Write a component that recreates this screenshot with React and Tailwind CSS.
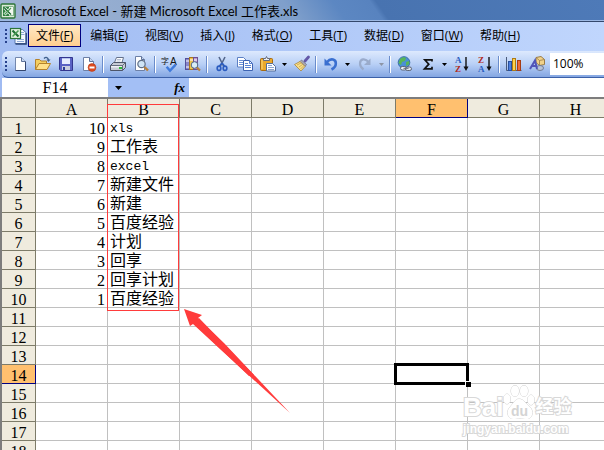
const COLUMNS = ['A', 'B', 'C', 'D', 'E', 'F', 'G', 'H', 'I', 'J', 'K', 'L'];
const WORDS = ['xls', '工作表', 'excel', '新建文件', '新建', '百度经验', '计划', '回享', '回享计划', '百度经验'];
const ROWS = Array.from({ length: 30 }, (_, i) => i + 1);
const MENUS = [
  ['文件', 'F'], ['编辑', 'E'], ['视图', 'V'], ['插入', 'I'], ['格式', 'O'],
  ['工具', 'T'], ['数据', 'D'], ['窗口', 'W'], ['帮助', 'H'],
];

function Svg({ children, className = 'h-4 w-4' }) {
  return (
    <svg viewBox="0 0 16 16" className={`${className} shrink-0 overflow-visible`} fill="none" aria-hidden="true">
      {children}
    </svg>
  );
}

function ExcelLogo() {
  return (
    <Svg>
      <rect x="1" y="1" width="14" height="14" rx="1" fill="#dcebd8" stroke="#2d7539" strokeWidth="1.400" />
      <rect x="3" y="3.500" width="10.500" height="9.500" fill="#2f8040" />
      <path d="M9 4h4v8.500H9z" fill="#f1f8ee" />
      <path d="M4.500 5l6.500 6.500" stroke="#fff" strokeWidth="2.600" />
      <path d="M11 5l-6.500 6.500" stroke="#fff" strokeWidth="2.600" />
      <path d="M4.500 5l6.500 6.500" stroke="#1f6b31" strokeWidth="1.500" />
      <path d="M11 5l-6.500 6.500" stroke="#4d9b55" strokeWidth="1.200" />
    </Svg>
  );
}

function WorkbookIcon() {
  return (
    <svg viewBox="0 0 18 20" className="h-5 w-[18px] shrink-0" fill="none" aria-hidden="true">
      <path d="M8 3.500h5.500l3.500 3v11H6V5z" fill="#f4f8ff" stroke="#5a78ae" />
      <path d="M12 6.500h3M12 8.500h3.500M8 13.500h7M8 15.500h7" stroke="#8fa9d6" />
      <path d="M17.200 7v11H6.500" stroke="#2d4678" strokeWidth="1.300" />
      <rect x="1.500" y="2.500" width="10" height="10" fill="#e4f3e0" stroke="#2d7539" strokeWidth="1.200" />
      <path d="M3.500 4.500l6 6" stroke="#1f7033" strokeWidth="2.200" />
      <path d="M9.500 4.500l-6 6" stroke="#4c9c56" strokeWidth="1.600" />
    </svg>
  );
}

const NewIcon = () => (
  <Svg>
    <path d="M3.500 1.500h6l4 4v9h-10z" fill="#fdfeff" stroke="#7387ad" />
    <path d="M13.500 5.500v9h-10" stroke="#33466f" />
    <path d="M9.500 1.500v4h4" fill="#c8d7ef" stroke="#5c7199" />
  </Svg>
);
const OpenIcon = () => (
  <Svg>
    <path d="M.5 13.500v-10h4l1.500 1.500h5.500v3" fill="#f4cf62" stroke="#b5822c" />
    <path d="M.5 13.500l3.500-6h11.500l-3.500 6z" fill="#ffe08a" stroke="#b5822c" />
    <path d="M9 2.500c2-2 4-1 4.500 1.500" stroke="#3f5f8c" strokeWidth="1.300" />
    <path d="M11.500 3.500h4l-2 2.500z" fill="#3f5f8c" />
  </Svg>
);
const SaveIcon = () => (
  <Svg>
    <path d="M1.500 1.500h13v13h-12l-1-1z" fill="#5a62c4" stroke="#33368f" />
    <rect x="4" y="2" width="8" height="6" fill="#e6edff" />
    <rect x="4" y="2" width="8" height="1" fill="#b6c4ef" />
    <rect x="4" y="10" width="8" height="4" fill="#c9cfdf" />
    <rect x="5" y="11" width="2" height="3" fill="#2c3c96" />
  </Svg>
);
const PermissionIcon = () => (
  <Svg>
    <path d="M2.500 1.500h6l4 4v9h-10z" fill="#fff" stroke="#6d80a6" />
    <path d="M8.500 1.500v4h4" fill="#c8d7ef" stroke="#5c7199" />
    <circle cx="11" cy="11.500" r="3.900" fill="#dd4a20" stroke="#b33a16" strokeWidth=".6" />
    <rect x="8.500" y="10.500" width="5" height="2" fill="#fff" />
  </Svg>
);
const PrintIcon = () => (
  <Svg>
    <path d="M4.500 6.500l2-5h7l-1.500 5z" fill="#fff" stroke="#65728c" />
    <path d="M7 3.500h4M6.500 5h4" stroke="#a3afc7" strokeWidth=".8" />
    <path d="M.5 9.500l3-3h12v5l-3 3h-12z" fill="#c6cad4" stroke="#4d5568" />
    <path d="M.5 9.500h12l3-3M12.500 9.500v5" stroke="#4d5568" strokeWidth=".8" />
    <path d="M1 10h11v1.500H1z" fill="#eef0f4" />
    <rect x="9" y="11" width="3" height="2" fill="#2dbb35" />
  </Svg>
);
const PreviewIcon = () => (
  <Svg>
    <path d="M2.500.5h6l3 3v11h-9z" fill="#fff" stroke="#6d80a6" />
    <path d="M8.500.5v3h3" fill="#c8d7ef" stroke="#5c7199" />
    <circle cx="8.500" cy="8" r="3.700" fill="#cfe4f5" stroke="#5f6f88" strokeWidth="1.200" />
    <path d="M11.500 11l3.500 3.500" stroke="#b9813c" strokeWidth="2.400" />
  </Svg>
);
const SpellIcon = () => (
  <Svg className="h-[18px] w-[18px]">
    <text x="0" y="8" fontSize="7" fill="#151515" className="font-['Noto_Sans_CJK_SC',sans-serif]">字</text>
    <text x="8" y="8.500" fontSize="9" fill="#151515" className="font-['Liberation_Sans',sans-serif]">A</text>
    <path d="M5 10.500l3 3.500 5-5.500" stroke="#3f7adb" strokeWidth="2.200" />
  </Svg>
);
const ResearchIcon = () => (
  <Svg>
    <rect x=".5" y="2.500" width="4" height="11" fill="#8a86c8" stroke="#55519a" />
    <rect x="4.500" y="1.500" width="4" height="12" fill="#f0c34c" stroke="#a87820" />
    <rect x="8.500" y="1.500" width="4" height="12" fill="#b89ad0" stroke="#6d5192" />
    <path d="M1 5h3M5 4h3M9 4h3M1 11h3" stroke="#fff" />
    <circle cx="9.500" cy="9" r="3.300" fill="#d9edf7" stroke="#516a86" />
    <path d="M12 11.500l3 3" stroke="#b9813c" strokeWidth="2.200" />
  </Svg>
);
const CutIcon = () => (
  <Svg>
    <path d="M5 1l4.500 9M11 1L6.500 10" stroke="#54678c" strokeWidth="1.600" />
    <path d="M8 7l-2.500 3M8 7l2.500 3" stroke="#2b5cc0" strokeWidth="1.500" />
    <ellipse cx="5" cy="12.300" rx="1.800" ry="2.200" stroke="#2b5cc0" strokeWidth="1.700" />
    <ellipse cx="11" cy="12.300" rx="1.800" ry="2.200" stroke="#2b5cc0" strokeWidth="1.700" />
  </Svg>
);
const CopyIcon = () => (
  <Svg>
    <path d="M.5 1.500h6l2.500 2.500v7h-8.500z" fill="#fff" stroke="#5d80c4" />
    <path d="M2 4.500h4M2 6.500h5M2 8.500h5" stroke="#6c92d8" />
    <path d="M6.500 4.500h6l3 3v7h-9z" fill="#fff" stroke="#3d63b2" />
    <path d="M12.500 4.500v3h3M8 7.500h3M8 9.500h6M8 11.500h6" stroke="#5a83d2" />
  </Svg>
);
const PasteIcon = () => (
  <Svg>
    <rect x=".5" y="2.500" width="12" height="12" rx="1" fill="#eba92b" stroke="#a66b12" />
    <path d="M2 4v9" stroke="#ffdb7c" />
    <path d="M3.500 4.500v-2h2l1-2 1 2h2v2z" fill="#e8ebf1" stroke="#646b7c" />
    <path d="M6.500 7.500h6l3 3v4.500h-9z" fill="#fff" stroke="#536d9c" />
    <path d="M8 9.500h4M8 11.500h6M8 13.500h6" stroke="#8ba4d0" />
  </Svg>
);
const PainterIcon = () => (
  <Svg>
    <path d="M11 5l3.500-4" stroke="#6458a8" strokeWidth="2.800" strokeLinecap="round" />
    <path d="M7.500 4l5 4.500-1.500 2-5-5z" fill="#a8a8b4" stroke="#6e6a78" strokeWidth=".7" />
    <path d="M6 5.500l5 5L7 15 .5 8.500z" fill="#f8df8a" stroke="#a9843a" strokeWidth=".8" />
    <path d="M3 9l4-2M5 11l3.500-2.500M6.500 13l3-3" stroke="#c9a24b" strokeWidth=".8" />
  </Svg>
);
const UndoIcon = () => (
  <Svg>
    <path d="M4 6C8 1.500 13 3.500 12.800 7.500c0 2.500-1.500 4.500-4.300 6" stroke="#3a6fd0" strokeWidth="2.600" />
    <path d="M1.500 2.500v7h7z" fill="#3a6fd0" />
  </Svg>
);
const RedoIcon = () => (
  <Svg>
    <path d="M12 6.500C8 1.500 3 3 3 7.500c0 3 1.500 4.500 3.500 6" stroke="#9aabcb" strokeWidth="2.200" />
    <path d="M13.500 2.500v6.500h-6.500z" fill="#9aabcb" />
  </Svg>
);
const LinkIcon = () => (
  <Svg>
    <circle cx="7" cy="6.500" r="5.800" fill="#4a8fd6" stroke="#386da9" />
    <path d="M3 3c2-2 5-2 6-1L8 5 5 6 4 9 1.500 7zM9 6l3-1 .5 3L9 10z" fill="#58b558" />
    <rect x="3.500" y="10.500" width="6" height="3.500" rx="1.700" fill="#eef1f6" stroke="#5e6676" />
    <rect x="8.500" y="11" width="6" height="3.500" rx="1.700" fill="#dfe3ec" stroke="#5e6676" />
    <path d="M6.500 12.300h5" stroke="#5e6676" />
  </Svg>
);
const SumIcon = () => (
  <Svg>
    <path d="M12 5.500V3.800H4.800L8.800 8.200l-4.300 4.600H12V10.800" stroke="#111" strokeWidth="1.700" />
  </Svg>
);
function SortIcon({ first, second, firstColor, secondColor }) {
  return (
    <Svg>
      <text x="1" y="6.500" fontSize="9" fill={firstColor} className="font-['Liberation_Serif',serif] font-bold">{first}</text>
      <text x="1" y="15.500" fontSize="9" fill={secondColor} className="font-['Liberation_Serif',serif] font-bold">{second}</text>
      <path d="M12 1v12" stroke="#111" strokeWidth="1.400" />
      <path d="M9.500 10.500h5L12 15z" fill="#111" />
    </Svg>
  );
}
const ChartIcon = () => (
  <Svg>
    <path d="M.5 1v13.500h15" stroke="#4a5a7a" />
    <rect x="2.500" y="5.500" width="3" height="9" fill="#4c7ee0" stroke="#27509f" />
    <rect x="6.500" y="2.500" width="3" height="12" fill="#ffd24a" stroke="#ad7a16" />
    <rect x="11.500" y="4.500" width="3" height="10" fill="#ee6a35" stroke="#a53c14" />
  </Svg>
);
const DrawingIcon = () => (
  <Svg>
    <path d="M7 1.500l5-1 3.500 3v5l-5 1-3.500-3z" fill="#f1d28a" stroke="#9a7d49" />
    <path d="M7 1.500l3.500 3 5-1M10.500 4.500v5" stroke="#9a7d49" strokeWidth=".8" />
    <ellipse cx="11" cy="12" rx="3.500" ry="2.500" fill="#b8c3d8" stroke="#6d7a95" />
    <path d="M1 13L6 4.500 8 13M3 10h5" stroke="#5154b8" strokeWidth="2" />
  </Svg>
);

function Tool({ label, children, disabled }) {
  return (
    <button type="button" aria-label={label} disabled={disabled} className="flex h-6 w-[23px] shrink-0 items-center justify-center">
      {children}
    </button>
  );
}

function More({ label, disabled }) {
  return (
    <button type="button" aria-label={label} disabled={disabled} className="flex h-6 w-[11px] shrink-0 items-center justify-center text-black disabled:text-[#8c95a6]">
      <svg viewBox="0 0 5 3" className="h-[3px] w-[5px]" aria-hidden="true"><path d="M0 0h5L2.500 3z" fill="currentColor" /></svg>
    </button>
  );
}

function Separator() {
  return (
    <div className="flex w-[6px] shrink-0 justify-center">
      <div className="h-[17px] w-[2px] border-l border-r border-l-[#6a8ccb] border-r-white" />
    </div>
  );
}

function Grip() {
  return (
    <div className="flex shrink-0 flex-col gap-[2px]">
      {[0, 1, 2, 3].map((i) => <div key={i} className="h-[2px] w-[2px] bg-[#27418c]" />)}
    </div>
  );
}

function TitleBar() {
  return (
    <header className="flex h-[22px] shrink-0 items-center gap-[5px] border-b border-[#34486c] bg-[linear-gradient(55deg,#9fb4d3_0%,#8fa9ce_30%,#7f9fcb_48%,#5c87c2_56%,#5883bf_62%,#4873b0_63%,#4e7ab8_100%)] shadow-[inset_0_-1px_0_#9db9e4]">
      <ExcelLogo />
      <h1 className="whitespace-nowrap font-['Lato','Noto_Sans_CJK_SC',sans-serif] text-[13px] leading-4 text-black">Microsoft Excel - 新建 Microsoft Excel 工作表.xls</h1>
    </header>
  );
}

function MenuBar() {
  return (
    <nav aria-label="菜单" className="flex h-[27px] shrink-0 items-center gap-px pl-[5px]">
      <Grip />
      <div className="flex w-[19px] justify-end"><WorkbookIcon /></div>
      {MENUS.map(([name, key], i) => (
        <button
          key={key}
          type="button"
          className={`h-[23px] shrink-0 whitespace-nowrap border px-[7px] pt-px text-xs leading-4 ${i === 0 ? 'border-[#000080] bg-gradient-to-b from-[#ffe8c4] to-[#ffcf8f]' : 'border-transparent'}`}
        >
          {name}(<span className="underline underline-offset-1">{key}</span>)
        </button>
      ))}
    </nav>
  );
}

function Toolbar() {
  return (
    <div role="toolbar" aria-label="常用" className="ml-[2px] flex h-[27px] shrink-0 items-center rounded-l-md border-b border-[#3b60a8] bg-gradient-to-b from-[#dde9fd] via-[#b9d0f6] to-[#84a6e2] pl-[3px]">
      <div className="w-[3px]"><Grip /></div>
      <Tool label="新建"><NewIcon /></Tool>
      <Tool label="打开"><OpenIcon /></Tool>
      <Tool label="保存"><SaveIcon /></Tool>
      <Tool label="权限"><PermissionIcon /></Tool>
      <Separator />
      <Tool label="打印"><PrintIcon /></Tool>
      <Tool label="打印预览"><PreviewIcon /></Tool>
      <Separator />
      <Tool label="拼写检查"><SpellIcon /></Tool>
      <Tool label="信息检索"><ResearchIcon /></Tool>
      <Separator />
      <Tool label="剪切"><CutIcon /></Tool>
      <Tool label="复制"><CopyIcon /></Tool>
      <Tool label="粘贴"><PasteIcon /></Tool>
      <More label="粘贴选项" />
      <Tool label="格式刷"><PainterIcon /></Tool>
      <Separator />
      <Tool label="撤消"><UndoIcon /></Tool>
      <More label="撤消列表" />
      <Tool label="恢复" disabled><RedoIcon /></Tool>
      <More label="恢复列表" disabled />
      <Separator />
      <Tool label="超链接"><LinkIcon /></Tool>
      <Tool label="自动求和"><SumIcon /></Tool>
      <More label="函数列表" />
      <Tool label="升序排序"><SortIcon first="A" second="Z" firstColor="#2c5fc0" secondColor="#b02a20" /></Tool>
      <Tool label="降序排序"><SortIcon first="Z" second="A" firstColor="#b02a20" secondColor="#2c5fc0" /></Tool>
      <Separator />
      <Tool label="图表向导"><ChartIcon /></Tool>
      <Tool label="绘图"><DrawingIcon /></Tool>
      <input aria-label="显示比例" defaultValue="100%" className="ml-[2px] h-[22px] min-w-0 flex-1 bg-white px-[3px] pb-[2px] text-xs" />
    </div>
  );
}

function FormulaBar() {
  return (
    <div className="ml-[2px] flex h-[19px] shrink-0 bg-[#a3bff5]">
      <input aria-label="名称框" defaultValue="F14" className="w-[106px] bg-white pt-px text-center font-['Liberation_Serif',serif] text-base leading-4" />
      <button type="button" aria-label="名称列表" className="flex w-5 items-center justify-center">
        <svg viewBox="0 0 7 4" className="h-1 w-[7px]" aria-hidden="true"><path d="M0 0h7L3.500 4z" fill="#000" /></svg>
      </button>
      <button type="button" aria-label="插入函数" className="ml-auto w-[61px] pr-1 text-right font-['Liberation_Serif',serif] text-[13px] font-bold italic leading-4">
        fx
      </button>
      <input aria-label="编辑栏" className="min-w-0 grow basis-[400px] bg-white" />
    </div>
  );
}

function Watermark() {
  return (
    <div aria-hidden="true" className="absolute left-[461px] top-[286px] flex flex-col gap-[2px] font-['Liberation_Sans','Noto_Sans_CJK_SC',sans-serif] font-bold text-white [-webkit-text-stroke:2px_#d8d8d8] [paint-order:stroke_fill]">
      <div className="flex h-[34px] items-end">
        <span className="text-[26px] leading-6">Bai</span>
        <svg viewBox="0 0 32 34" className="h-[34px] w-8 [-webkit-text-stroke:0]" fill="#fff" stroke="#d0d0d0" strokeWidth="1">
          <ellipse cx="4" cy="14" rx="3.500" ry="5" />
          <ellipse cx="12" cy="6" rx="4" ry="5.500" />
          <ellipse cx="21" cy="6" rx="4" ry="5.500" />
          <ellipse cx="28" cy="15" rx="3.500" ry="5" />
          <path d="M16 14c-4 0-6 5-9 8-4 4-3 12 4 12 3 0 4-1 6-1s3 1 6 1c7 0 8-8 4-12-4-3-6-8-11-8z" />
          <text x="8" y="31" fontSize="14" stroke="none" fill="#d4d4d4" className="font-['Liberation_Sans',sans-serif]">du</text>
        </svg>
        <span className="text-lg leading-6">经验</span>
      </div>
      <span className="text-xs leading-4">jingyan.baidu.com</span>
    </div>
  );
}

function Sheet() {
  return (
    <main className="flex min-h-0 flex-1 overflow-hidden border-l-2 border-t-2 border-[#7d7d7d] bg-white">
      <div className="relative min-w-0 flex-1 overflow-hidden">
        <table className="w-[898px] table-fixed border-separate border-spacing-0 font-['Liberation_Serif','Noto_Sans_CJK_SC',serif] text-base">
          <colgroup>
            <col className="w-[34px]" />
            {COLUMNS.map((c) => <col key={c} className="w-[72px]" />)}
          </colgroup>
          <thead>
            <tr className="h-[19px]">
              <th className="border-b border-r border-[#7d7b69] bg-[#efebde] p-0" />
              {COLUMNS.map((c) => (
                <th key={c} scope="col" className={`border-b border-r p-0 pt-[3px] font-normal leading-[15px] ${c === 'F' ? 'border-[#000080] bg-[#ffc06f]' : 'border-[#7d7b69] bg-[#efebde]'}`}>
                  {c}
                </th>
              ))}
            </tr>
          </thead>
          <tbody>
            {ROWS.map((r) => (
              <tr key={r} className="h-[19px]">
                <th scope="row" className={`border-b border-r p-0 pt-[3px] font-normal leading-[15px] ${r === 14 ? 'border-[#000080] bg-[#ffc06f]' : 'border-[#7d7b69] bg-[#efebde]'}`}>
                  {r}
                </th>
                {COLUMNS.map((c) => (
                  <td key={c} className={`whitespace-nowrap border-b border-r border-[#c0c0c0] p-0 ${c === 'F' && r === 14 ? 'relative' : ''} ${c === 'A' ? 'pr-[2px] pt-[3px] text-right leading-[15px]' : "pl-[2px] pt-[4px] text-left font-['Liberation_Mono','Noto_Sans_CJK_SC',monospace] leading-[14px]"}`}>
                    {c === 'A' && r <= 10 ? 11 - r : null}
                    {c === 'B' && r <= 10 ? <span className={`block ${/^[a-z]/.test(WORDS[r - 1]) ? 'text-[13px] leading-[14px]' : ''}`}>{WORDS[r - 1]}</span> : null}
                    {c === 'F' && r === 14 ? (
                      <>
                        <div className="absolute -inset-[2px] z-10 border-[3px] border-black" />
                        <div className="absolute -bottom-1 -right-1 z-10 h-[6px] w-[6px] border-l border-t border-white bg-black" />
                      </>
                    ) : null}
                  </td>
                ))}
              </tr>
            ))}
          </tbody>
        </table>
        <div className="absolute left-[105px] top-[5px] z-10 h-[207px] w-[72px] border border-[#ff3b3b]" />
        <svg viewBox="0 0 106 104" className="absolute left-[182px] top-[210px] h-[104px] w-[106px]" aria-hidden="true">
          <path d="M0 0L18 6 14 9 40 34 106 104 36 40 9 15 6 17z" fill="#ff3b3b" />
          <path d="M15 9l25 26 30 31-5 1L9 14z" fill="#ff3b3b" />
        </svg>
        <Watermark />
      </div>
    </main>
  );
}

export default function App() {
  return (
    <div className="flex h-screen flex-col overflow-hidden bg-gradient-to-r from-[#a0bbf2] to-[#c0d6fd] font-['Open_Sans','Noto_Sans_CJK_SC',sans-serif] text-black">
      <TitleBar />
      <MenuBar />
      <div className="h-[2px] shrink-0" />
      <Toolbar />
      <FormulaBar />
      <Sheet />
    </div>
  );
}
